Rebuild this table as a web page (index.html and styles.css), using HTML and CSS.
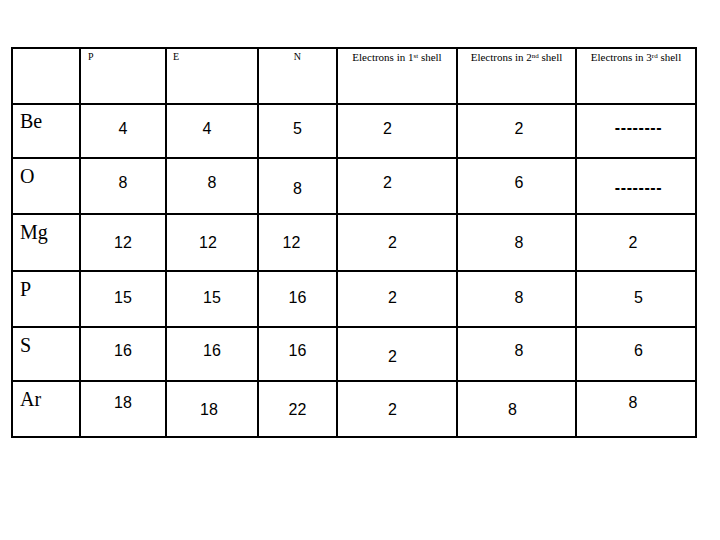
FILE: index.html
```html
<!DOCTYPE html>
<html lang="en">
<head>
<meta charset="utf-8">
<title>Electron shells</title>
<link rel="stylesheet" href="styles.css">
</head>
<body>
<table class="grid">
  <colgroup>
    <col class="w-el"><col class="w-p"><col class="w-e"><col class="w-n"><col class="w-s"><col class="w-s2"><col class="w-s3">
  </colgroup>
  <thead>
    <tr class="r-head">
      <th class="el"></th>
      <th class="h-mono h-left">P</th>
      <th class="h-mono h-left h-e">E</th>
      <th class="h-mono">N</th>
      <th class="h-serif">Electrons in 1<sup>st</sup> shell</th>
      <th class="h-serif">Electrons in 2<sup>nd</sup> shell</th>
      <th class="h-serif">Electrons in 3<sup>rd</sup> shell</th>
    </tr>
  </thead>
  <tbody>
    <tr class="r-be">
      <td class="el">Be</td>
      <td class="n">4</td>
      <td class="n l10">4</td>
      <td class="n">5</td>
      <td class="n c4 far">2</td>
      <td class="n c5">2</td>
      <td class="n c6 dash">--------</td>
    </tr>
    <tr class="r-o">
      <td class="el">O</td>
      <td class="n">8</td>
      <td class="n">8</td>
      <td class="n low">8</td>
      <td class="n c4 far">2</td>
      <td class="n c5">6</td>
      <td class="n c6 dash">--------</td>
    </tr>
    <tr class="r-mg">
      <td class="el">Mg</td>
      <td class="n">12</td>
      <td class="n l8">12</td>
      <td class="n l12">12</td>
      <td class="n c4">2</td>
      <td class="n c5">8</td>
      <td class="n c6 back">2</td>
    </tr>
    <tr class="r-p">
      <td class="el">P</td>
      <td class="n">15</td>
      <td class="n">15</td>
      <td class="n">16</td>
      <td class="n c4">2</td>
      <td class="n c5">8</td>
      <td class="n c6">5</td>
    </tr>
    <tr class="r-s">
      <td class="el">S</td>
      <td class="n">16</td>
      <td class="n">16</td>
      <td class="n">16</td>
      <td class="n c4 low">2</td>
      <td class="n c5">8</td>
      <td class="n c6">6</td>
    </tr>
    <tr class="r-ar">
      <td class="el">Ar</td>
      <td class="n">18</td>
      <td class="n l6 low">18</td>
      <td class="n low">22</td>
      <td class="n c4 low">2</td>
      <td class="n back8 low">8</td>
      <td class="n c6 back">8</td>
    </tr>
  </tbody>
</table>
</body>
</html>
```
FILE: styles.css
```css
html, body {
  margin: 0;
  padding: 0;
  background: #ffffff;
}

.grid {
  margin: 47px 0 0 11px;
  table-layout: fixed;
  width: 686px;
  border-collapse: separate;
  border-spacing: 2px;
  background: #000000;
  color: #000000;
}

.w-el { width: 66px; }
.w-p { width: 84px; }
.w-e { width: 90px; }
.w-n { width: 77px; }
.w-s { width: 118px; }
.w-s2 { width: 117px; }
.w-s3 { width: 118px; }

.grid th,
.grid td {
  background: #ffffff;
  padding: 0;
  vertical-align: top;
  text-align: center;
  font-weight: normal;
  overflow: hidden;
  white-space: nowrap;
}

/* row heights */
.r-head { height: 54px; }
.r-be { height: 52px; }
.r-o { height: 54px; }
.r-mg { height: 55px; }
.r-p { height: 54px; }
.r-s { height: 52px; }
.r-ar { height: 54px; }

/* header */
.grid .h-mono {
  font-family: "Liberation Serif", "DejaVu Serif", serif;
  font-size: 10px;
  line-height: 12px;
  padding-top: 2px;
  letter-spacing: 0.3px;
}
.grid .h-left {
  text-align: left;
  padding-left: 7px;
}
.grid .h-e { padding-left: 6px; }
.grid .h-serif {
  font-family: "Liberation Serif", "DejaVu Serif", serif;
  font-size: 11px;
  line-height: 13px;
  padding-top: 2px;
}
.h-serif sup {
  font-size: 7px;
  line-height: 0;
  vertical-align: 3px;
}

/* element labels */
.grid td.el {
  font-family: "Liberation Serif", "DejaVu Serif", serif;
  font-size: 20px;
  line-height: 22px;
  text-align: left;
  padding-left: 7px;
  padding-top: 6px;
}
.grid .r-be td.el { padding-top: 5px; }

/* numbers */
.n {
  font-family: "Liberation Sans", Arial, sans-serif;
  font-size: 16px;
  line-height: 18px;
}
.n.dash {
  letter-spacing: 0.6px;
  font-weight: bold;
}

.grid .r-be .n { padding-top: 15px; }
.grid .r-be .dash { padding-top: 14px; }
.grid .r-o .n { padding-top: 15px; }
.grid .r-o .low { padding-top: 21px; }
.grid .r-o .dash { padding-top: 20px; }
.grid .r-mg .n { padding-top: 19px; }
.grid .r-p .n { padding-top: 17px; }
.grid .r-s .n { padding-top: 14px; }
.grid .r-s .low { padding-top: 20px; }
.grid .r-ar .n { padding-top: 12px; }
.grid .r-ar .low { padding-top: 19px; }

/* horizontal nudges */
.grid .c4 { padding-right: 9px; }
.grid .c4.far { padding-right: 19px; }
.grid .c5 { padding-left: 5px; }
.grid .back8 { padding-right: 8px; }
.grid .c6 { padding-left: 5px; }
.grid .c6.back { padding-left: 0; padding-right: 6px; }
.grid .l10 { padding-right: 10px; }
.grid .l8 { padding-right: 8px; }
.grid .l12 { padding-right: 12px; }
.grid .l6 { padding-right: 6px; }
```
